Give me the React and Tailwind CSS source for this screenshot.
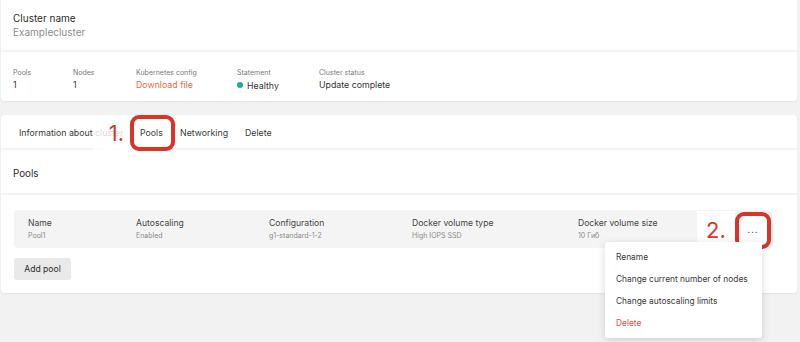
import React from 'react';

const font = { fontFamily: 'Inter, "Noto Sans", sans-serif' };

const Stat = ({ label, children, className = '' }) => (
	<div className={className}>
		<div className="text-[7px] text-[#7a7a7a] leading-[10px]">{label}</div>
		<div className="text-[8.8px] text-[#333] leading-[13px]">{children}</div>
	</div>
);

const PoolCol = ({ label, value, className = '' }) => (
	<div className={className}>
		<div className="text-[8.6px] text-[#444] leading-[12px]">{label}</div>
		<div className="text-[7px] text-[#8a8a8a] leading-[11px] mt-[1px]">{value}</div>
	</div>
);

const App = () => {
	return (
		<div className="w-[800px] h-[342px] bg-[#f2f2f2] overflow-hidden relative pl-[1px] pr-[3px]" style={font}>
			{/* cluster card */}
			<div className="bg-white rounded-b-[4px] shadow-[0_1px_2px_rgba(0,0,0,0.06)]">
				<div className="h-[52px] px-[12px] pt-[11px] border-b-[2px] border-[#f4f4f4]">
					<div className="text-[10px] text-[#2b2b2b] leading-[14px]">Cluster name</div>
					<div className="text-[10px] text-[#8c8c8c] leading-[14px]">Examplecluster</div>
				</div>
				<div className="h-[49px] px-[12px] pt-[16px] flex">
					<Stat label="Pools" className="w-[60px]">1</Stat>
					<Stat label="Nodes" className="w-[63px]">1</Stat>
					<Stat label="Kubernetes config" className="w-[101px]">
						<span className="text-[#e8693f]">Download file</span>
					</Stat>
					<Stat label="Statement" className="w-[82px]">
						<span className="inline-flex items-center gap-[4px]">
							<span className="w-[6px] h-[6px] rounded-full bg-[#1eab9c]"></span>
							Healthy
						</span>
					</Stat>
					<Stat label="Cluster status">Update complete</Stat>
				</div>
			</div>

			{/* pools card */}
			<div className="mt-[14px] bg-white rounded-[4px] shadow-[0_1px_2px_rgba(0,0,0,0.06)] relative">
				<div className="h-[35px] flex items-center pl-[18px] pt-[3px] border-b-[2px] border-[#f4f4f4] text-[8.8px] text-[#3a3a3a]">
					<span className="w-[121px]">Information about cluster</span>
					<span className="w-[40px]">Pools</span>
					<span className="w-[65px]">Networking</span>
					<span>Delete</span>
				</div>
				<div className="h-[45px] flex items-center px-[12px] pt-[6px] border-b-[2px] border-[#f4f4f4]">
					<span className="text-[9.8px] text-[#2b2b2b]">Pools</span>
				</div>
				<div className="px-[13px] pt-[15px] pb-[13px]">
					<div className="h-[38px] mr-[11px] bg-[#f4f4f4] rounded-[4px] flex items-center pl-[14px] relative">
						<PoolCol label="Name" value="Pool1" className="w-[108px]" />
						<PoolCol label="Autoscaling" value="Enabled" className="w-[133px]" />
						<PoolCol label="Configuration" value="g1-standard-1-2" className="w-[143px]" />
						<PoolCol label="Docker volume type" value="High IOPS SSD" className="w-[166px]" />
						<PoolCol label="Docker volume size" value="10 Гиб" />
						<span className="absolute right-[9px] top-[13px]">
							<svg width="6" height="10" viewBox="0 0 6 10" fill="none" stroke="#777" strokeWidth="1.3">
								<path d="M1 1l4 4-4 4" />
							</svg>
						</span>
					</div>
					<button className="mt-[10px] h-[22px] w-[57px] bg-[#e9e9e9] rounded-[3px] text-[8.6px] text-[#2b2b2b]">Add pool</button>
				</div>

				{/* annotation 1 */}
				<div className="absolute left-[92px] top-0 w-[37px] h-[35px] bg-white/80 flex items-center justify-end pr-[6px]">
					<span className="text-[22px] leading-none text-[#d8372d]">1.</span>
				</div>
				<div className="absolute left-[129px] top-0 w-[45px] h-[36px] border-[4px] border-[#da3328] rounded-[9px]"></div>
			</div>

			{/* annotation 2 */}
			<div className="absolute left-[697px] top-[211px] w-[38px] h-[38px] bg-white flex items-center justify-center">
				<span className="text-[22px] leading-none text-[#d8372d]">2.</span>
			</div>
			<div className="absolute left-[735px] top-[212px] w-[36px] h-[37px] border-[4px] border-[#da3328] rounded-[9px] bg-white flex items-center justify-center">
				<span className="text-[9px] text-[#555] leading-none tracking-[1px] -mt-[3px]">...</span>
			</div>

			{/* dropdown menu */}
			<div className="absolute left-[605px] top-[242px] w-[157px] h-[96px] bg-white rounded-[3px] shadow-[0_2px_8px_rgba(0,0,0,0.15)] py-[4px]">
				{['Rename', 'Change current number of nodes', 'Change autoscaling limits'].map((item) => (
					<div key={item} className="h-[22px] flex items-center px-[11px] text-[8.4px] text-[#3a3a3a] whitespace-nowrap">{item}</div>
				))}
				<div className="h-[22px] flex items-center px-[11px] text-[8.4px] text-[#e5484d]">Delete</div>
			</div>
		</div>
	);
};

export default App;
